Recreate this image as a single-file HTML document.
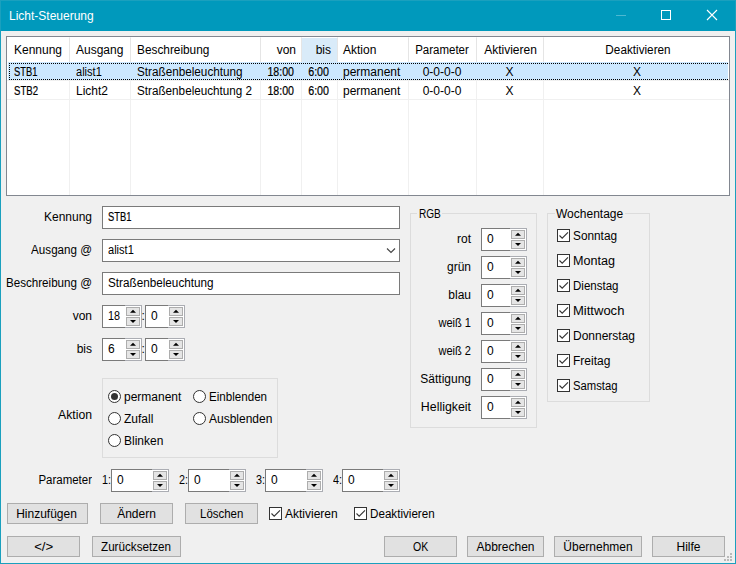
<!DOCTYPE html>
<html><head><meta charset="utf-8"><title>Licht-Steuerung</title>
<style>
*{box-sizing:border-box;margin:0;padding:0}
html,body{width:736px;height:564px;overflow:hidden;background:#f0f0f0}
body{font-family:"Liberation Sans",sans-serif;font-size:12px;color:#000;position:relative}
.a{position:absolute;white-space:nowrap;line-height:14px;height:14px}
.r{text-align:right}
.c{text-align:center}
.win{position:absolute;left:0;top:0;width:736px;height:564px;border:1px solid #1aa0be}
.title{position:absolute;left:0;top:0;width:736px;height:31px;background:#0099bc}
.lv{position:absolute;left:6px;top:36px;width:724px;height:160px;border:1px solid #828790;background:#fff}
.vl{position:absolute;top:37px;width:1px;height:158px;background:#f0f0f0}
.hl{position:absolute;left:7px;width:722px;height:1px;background:#f0f0f0}
.sel{position:absolute;left:8px;top:62px;width:720px;height:18px;background:#cce8ff}
.dh{position:absolute;left:9px;width:719px;height:1px;background:repeating-linear-gradient(90deg,#000 0 1px,transparent 1px 2px)}
.dv{position:absolute;left:9px;top:63px;width:1px;height:17px;background:repeating-linear-gradient(180deg,#000 0 1px,transparent 1px 2px)}
.inp{position:absolute;left:102px;width:298px;height:23px;border:1px solid #7a7a7a;background:#fff}
.btn{position:absolute;height:21px;border:1px solid #adadad;background:#e1e1e1;text-align:center;line-height:21px;white-space:nowrap}
.gb{position:absolute;border:1px solid #dcdcdc}
.gbl{position:absolute;background:#f0f0f0;padding:0 2px;line-height:14px;height:14px;white-space:nowrap}
.cb{position:absolute;width:13px;height:13px;border:1px solid #333;background:#fff}
.rb{position:absolute;width:13px;height:13px;border:1px solid #333;background:#fff;border-radius:50%}
.rb.on:after{content:"";position:absolute;left:2px;top:2px;width:7px;height:7px;border-radius:50%;background:#333}
.sp{position:absolute;height:23px;background:#fff;border:1px solid #abadb3}
.sp .e{position:absolute;left:-1px;top:-1px;height:23px;border:1px solid #7a7a7a;border-right:none;background:#fff}
.sp .u,.sp .d{position:absolute;right:1px;width:14px;height:9px;border:1px solid #adadad;background:#e5e5e5}
.sp .u{top:1px}.sp .d{top:11px}
.sp svg{position:absolute;left:0;top:0}
.sp .t{position:absolute;left:5px;top:3px;line-height:14px}
</style></head>
<body>
<div class="title"></div>
<div class="a " style="left:9px;top:9px;color:#fff">Licht-Steuerung</div>
<svg class="a" style="left:600px;top:0;width:136px;height:31px" width="136" height="31"><path d="M16 15.5 H26" stroke="#4db8d1" stroke-width="1"/><rect x="61.5" y="10.5" width="9" height="9" fill="none" stroke="#fff" stroke-width="1"/><path d="M107 10 L117 20 M117 10 L107 20" stroke="#fff" stroke-width="1.1"/></svg>
<div class="lv"></div>
<div style="position:absolute;left:302px;top:38px;width:35px;height:24px;background:#d9ebf9"></div>
<div class="vl" style="left:69px"></div><div class="vl" style="left:69px;top:38px;height:24px;background:#e5e5e5"></div>
<div class="vl" style="left:130px"></div><div class="vl" style="left:130px;top:38px;height:24px;background:#e5e5e5"></div>
<div class="vl" style="left:260px"></div><div class="vl" style="left:260px;top:38px;height:24px;background:#e5e5e5"></div>
<div class="vl" style="left:301px"></div><div class="vl" style="left:301px;top:38px;height:24px;background:#e5e5e5"></div>
<div class="vl" style="left:337px"></div><div class="vl" style="left:337px;top:38px;height:24px;background:#e5e5e5"></div>
<div class="vl" style="left:408px"></div><div class="vl" style="left:408px;top:38px;height:24px;background:#e5e5e5"></div>
<div class="vl" style="left:476px"></div><div class="vl" style="left:476px;top:38px;height:24px;background:#e5e5e5"></div>
<div class="vl" style="left:543px"></div><div class="vl" style="left:543px;top:38px;height:24px;background:#e5e5e5"></div>
<div class="hl" style="top:80px"></div><div class="hl" style="top:99px"></div>
<div class="sel"></div>
<div class="dh" style="top:63px"></div><div class="dh" style="top:79px"></div><div class="dv"></div>
<div class="a " style="left:14px;top:43px;">Kennung</div>
<div class="a " style="left:76px;top:43px;">Ausgang</div>
<div class="a " style="left:137px;top:43px;transform:scaleX(0.986);transform-origin:left center;">Beschreibung</div>
<div class="a r" style="left:261px;top:43px;width:35px;">von</div>
<div class="a r" style="left:301px;top:43px;width:30px;">bis</div>
<div class="a " style="left:343px;top:43px;">Aktion</div>
<div class="a c" style="left:408px;top:43px;width:68px;transform:scaleX(0.957);transform-origin:center center;">Parameter</div>
<div class="a c" style="left:477px;top:43px;width:67px;">Aktivieren</div>
<div class="a c" style="left:545px;top:43px;width:186px;transform:scaleX(0.978);transform-origin:center center;">Deaktivieren</div>
<div class="a " style="left:14px;top:65px;transform:scaleX(0.78);transform-origin:left center;-webkit-text-stroke:0.2px #000;">STB1</div>
<div class="a " style="left:76px;top:65px;transform:scaleX(0.92);transform-origin:left center;">alist1</div>
<div class="a " style="left:137px;top:65px;transform:scaleX(0.977);transform-origin:left center;">Straßenbeleuchtung</div>
<div class="a r" style="left:261px;top:65px;width:33px;transform:scaleX(0.885);transform-origin:right center;-webkit-text-stroke:0.2px #000;">18:00</div>
<div class="a r" style="left:301px;top:65px;width:28px;transform:scaleX(0.89);transform-origin:right center;-webkit-text-stroke:0.2px #000;">6:00</div>
<div class="a " style="left:343px;top:65px;">permanent</div>
<div class="a c" style="left:408px;top:65px;width:68px;">0-0-0-0</div>
<div class="a c" style="left:476px;top:65px;width:67px;">X</div>
<div class="a c" style="left:544px;top:65px;width:186px;">X</div>
<div class="a " style="left:14px;top:84px;transform:scaleX(0.8);transform-origin:left center;-webkit-text-stroke:0.2px #000;">STB2</div>
<div class="a " style="left:76px;top:84px;">Licht2</div>
<div class="a " style="left:137px;top:84px;transform:scaleX(0.975);transform-origin:left center;">Straßenbeleuchtung 2</div>
<div class="a r" style="left:261px;top:84px;width:33px;transform:scaleX(0.885);transform-origin:right center;-webkit-text-stroke:0.2px #000;">18:00</div>
<div class="a r" style="left:301px;top:84px;width:28px;transform:scaleX(0.89);transform-origin:right center;-webkit-text-stroke:0.2px #000;">6:00</div>
<div class="a " style="left:343px;top:84px;">permanent</div>
<div class="a c" style="left:408px;top:84px;width:68px;">0-0-0-0</div>
<div class="a c" style="left:476px;top:84px;width:67px;">X</div>
<div class="a c" style="left:544px;top:84px;width:186px;">X</div>
<div class="inp" style="top:206px"></div>
<div class="a r" style="left:0px;top:210px;width:92px;">Kennung</div>
<div class="a " style="left:108px;top:210px;transform:scaleX(0.78);transform-origin:left center;-webkit-text-stroke:0.2px #000;">STB1</div>
<div class="inp" style="top:239px"></div>
<div class="a r" style="left:0px;top:243px;width:92px;transform:scaleX(0.968);transform-origin:right center;">Ausgang @</div>
<div class="a " style="left:108px;top:243px;transform:scaleX(0.92);transform-origin:left center;">alist1</div>
<div class="inp" style="top:272px"></div>
<div class="a r" style="left:0px;top:276px;width:92px;transform:scaleX(0.968);transform-origin:right center;">Beschreibung @</div>
<div class="a " style="left:108px;top:276px;transform:scaleX(0.977);transform-origin:left center;">Straßenbeleuchtung</div>
<svg class="a" style="left:385px;top:246px;width:12px;height:10px" width="12" height="10"><path d="M2 2.5 L6 6.5 L10 2.5" fill="none" stroke="#444" stroke-width="1.1"/></svg>
<div class="a r" style="left:0px;top:309px;width:92px;">von</div>
<div class="sp" style="left:102px;top:305px;width:40px"><div class="e" style="width:23px"></div><div class="u"><svg width="12" height="7"><path d="M3 4.7 L6 1.7 L9 4.7Z" fill="#000"/></svg></div><div class="d"><svg width="12" height="7"><path d="M3 2 L9 2 L6 5Z" fill="#000"/></svg></div><div class="t" style="transform:scaleX(0.9);transform-origin:left center">18</div></div>
<div class="a " style="left:141.5px;top:309px;">:</div>
<div class="sp" style="left:145px;top:305px;width:40px"><div class="e" style="width:23px"></div><div class="u"><svg width="12" height="7"><path d="M3 4.7 L6 1.7 L9 4.7Z" fill="#000"/></svg></div><div class="d"><svg width="12" height="7"><path d="M3 2 L9 2 L6 5Z" fill="#000"/></svg></div><div class="t">0</div></div>
<div class="a r" style="left:0px;top:342px;width:92px;">bis</div>
<div class="sp" style="left:102px;top:338px;width:40px"><div class="e" style="width:23px"></div><div class="u"><svg width="12" height="7"><path d="M3 4.7 L6 1.7 L9 4.7Z" fill="#000"/></svg></div><div class="d"><svg width="12" height="7"><path d="M3 2 L9 2 L6 5Z" fill="#000"/></svg></div><div class="t">6</div></div>
<div class="a " style="left:141.5px;top:342px;">:</div>
<div class="sp" style="left:145px;top:338px;width:40px"><div class="e" style="width:23px"></div><div class="u"><svg width="12" height="7"><path d="M3 4.7 L6 1.7 L9 4.7Z" fill="#000"/></svg></div><div class="d"><svg width="12" height="7"><path d="M3 2 L9 2 L6 5Z" fill="#000"/></svg></div><div class="t">0</div></div>
<div class="gb" style="left:102px;top:378px;width:176px;height:80px"></div>
<div class="a r" style="left:0px;top:408px;width:92px;transform:scaleX(1.02);transform-origin:right center;">Aktion</div>
<div class="rb on" style="left:108px;top:390px"></div>
<div class="a " style="left:124px;top:390px;">permanent</div>
<div class="rb" style="left:108px;top:412px"></div>
<div class="a " style="left:124px;top:412px;">Zufall</div>
<div class="rb" style="left:108px;top:434px"></div>
<div class="a " style="left:124px;top:434px;">Blinken</div>
<div class="rb" style="left:193px;top:390px"></div>
<div class="a " style="left:209px;top:390px;transform:scaleX(0.967);transform-origin:left center;">Einblenden</div>
<div class="rb" style="left:193px;top:412px"></div>
<div class="a " style="left:209px;top:412px;">Ausblenden</div>
<div class="a r" style="left:0px;top:473px;width:92px;transform:scaleX(0.957);transform-origin:right center;">Parameter</div>
<div class="a " style="left:101.5px;top:473px;transform:scaleX(0.9);transform-origin:left center;">1:</div>
<div class="sp" style="left:111px;top:469px;width:58px"><div class="e" style="width:41px"></div><div class="u"><svg width="12" height="7"><path d="M3 4.7 L6 1.7 L9 4.7Z" fill="#000"/></svg></div><div class="d"><svg width="12" height="7"><path d="M3 2 L9 2 L6 5Z" fill="#000"/></svg></div><div class="t">0</div></div>
<div class="a " style="left:178.5px;top:473px;transform:scaleX(0.9);transform-origin:left center;">2:</div>
<div class="sp" style="left:188px;top:469px;width:58px"><div class="e" style="width:41px"></div><div class="u"><svg width="12" height="7"><path d="M3 4.7 L6 1.7 L9 4.7Z" fill="#000"/></svg></div><div class="d"><svg width="12" height="7"><path d="M3 2 L9 2 L6 5Z" fill="#000"/></svg></div><div class="t">0</div></div>
<div class="a " style="left:255.5px;top:473px;transform:scaleX(0.9);transform-origin:left center;">3:</div>
<div class="sp" style="left:265px;top:469px;width:58px"><div class="e" style="width:41px"></div><div class="u"><svg width="12" height="7"><path d="M3 4.7 L6 1.7 L9 4.7Z" fill="#000"/></svg></div><div class="d"><svg width="12" height="7"><path d="M3 2 L9 2 L6 5Z" fill="#000"/></svg></div><div class="t">0</div></div>
<div class="a " style="left:332.5px;top:473px;transform:scaleX(0.9);transform-origin:left center;">4:</div>
<div class="sp" style="left:342px;top:469px;width:58px"><div class="e" style="width:41px"></div><div class="u"><svg width="12" height="7"><path d="M3 4.7 L6 1.7 L9 4.7Z" fill="#000"/></svg></div><div class="d"><svg width="12" height="7"><path d="M3 2 L9 2 L6 5Z" fill="#000"/></svg></div><div class="t">0</div></div>
<div class="gb" style="left:410px;top:213px;width:127px;height:215px"></div>
<div class="gbl" style="left:417px;top:207px;width:25px;padding:0"><span class="t" style="display:inline-block;margin-left:2px;transform:scaleX(0.84);transform-origin:left center">RGB</span></div>
<div class="a r" style="left:400px;top:232px;width:71px;">rot</div>
<div class="sp" style="left:481px;top:228px;width:46px"><div class="e" style="width:29px"></div><div class="u"><svg width="12" height="7"><path d="M3 4.7 L6 1.7 L9 4.7Z" fill="#000"/></svg></div><div class="d"><svg width="12" height="7"><path d="M3 2 L9 2 L6 5Z" fill="#000"/></svg></div><div class="t">0</div></div>
<div class="a r" style="left:400px;top:260px;width:71px;">grün</div>
<div class="sp" style="left:481px;top:256px;width:46px"><div class="e" style="width:29px"></div><div class="u"><svg width="12" height="7"><path d="M3 4.7 L6 1.7 L9 4.7Z" fill="#000"/></svg></div><div class="d"><svg width="12" height="7"><path d="M3 2 L9 2 L6 5Z" fill="#000"/></svg></div><div class="t">0</div></div>
<div class="a r" style="left:400px;top:288px;width:71px;">blau</div>
<div class="sp" style="left:481px;top:284px;width:46px"><div class="e" style="width:29px"></div><div class="u"><svg width="12" height="7"><path d="M3 4.7 L6 1.7 L9 4.7Z" fill="#000"/></svg></div><div class="d"><svg width="12" height="7"><path d="M3 2 L9 2 L6 5Z" fill="#000"/></svg></div><div class="t">0</div></div>
<div class="a r" style="left:400px;top:316px;width:71px;transform:scaleX(0.92);transform-origin:right center;">weiß 1</div>
<div class="sp" style="left:481px;top:312px;width:46px"><div class="e" style="width:29px"></div><div class="u"><svg width="12" height="7"><path d="M3 4.7 L6 1.7 L9 4.7Z" fill="#000"/></svg></div><div class="d"><svg width="12" height="7"><path d="M3 2 L9 2 L6 5Z" fill="#000"/></svg></div><div class="t">0</div></div>
<div class="a r" style="left:400px;top:344px;width:71px;transform:scaleX(0.92);transform-origin:right center;">weiß 2</div>
<div class="sp" style="left:481px;top:340px;width:46px"><div class="e" style="width:29px"></div><div class="u"><svg width="12" height="7"><path d="M3 4.7 L6 1.7 L9 4.7Z" fill="#000"/></svg></div><div class="d"><svg width="12" height="7"><path d="M3 2 L9 2 L6 5Z" fill="#000"/></svg></div><div class="t">0</div></div>
<div class="a r" style="left:400px;top:372px;width:71px;">Sättigung</div>
<div class="sp" style="left:481px;top:368px;width:46px"><div class="e" style="width:29px"></div><div class="u"><svg width="12" height="7"><path d="M3 4.7 L6 1.7 L9 4.7Z" fill="#000"/></svg></div><div class="d"><svg width="12" height="7"><path d="M3 2 L9 2 L6 5Z" fill="#000"/></svg></div><div class="t">0</div></div>
<div class="a r" style="left:400px;top:400px;width:71px;transform:scaleX(1.03);transform-origin:right center;">Helligkeit</div>
<div class="sp" style="left:481px;top:396px;width:46px"><div class="e" style="width:29px"></div><div class="u"><svg width="12" height="7"><path d="M3 4.7 L6 1.7 L9 4.7Z" fill="#000"/></svg></div><div class="d"><svg width="12" height="7"><path d="M3 2 L9 2 L6 5Z" fill="#000"/></svg></div><div class="t">0</div></div>
<div class="gb" style="left:547px;top:213px;width:103px;height:189px"></div>
<div class="gbl" style="left:555px;top:207px;width:70px;padding:0 0 0 1px">Wochentage</div>
<div class="cb" style="left:557px;top:229px"><svg width="11" height="11" style="position:absolute;left:0;top:0"><path d="M1.5 5.5 L4.2 8.2 L10 2.4" fill="none" stroke="#333" stroke-width="1.1"/></svg></div>
<div class="a " style="left:573px;top:229px;transform:scaleX(0.985);transform-origin:left center;">Sonntag</div>
<div class="cb" style="left:557px;top:254px"><svg width="11" height="11" style="position:absolute;left:0;top:0"><path d="M1.5 5.5 L4.2 8.2 L10 2.4" fill="none" stroke="#333" stroke-width="1.1"/></svg></div>
<div class="a " style="left:573px;top:254px;transform:scaleX(1.05);transform-origin:left center;">Montag</div>
<div class="cb" style="left:557px;top:279px"><svg width="11" height="11" style="position:absolute;left:0;top:0"><path d="M1.5 5.5 L4.2 8.2 L10 2.4" fill="none" stroke="#333" stroke-width="1.1"/></svg></div>
<div class="a " style="left:573px;top:279px;transform:scaleX(0.96);transform-origin:left center;">Dienstag</div>
<div class="cb" style="left:557px;top:304px"><svg width="11" height="11" style="position:absolute;left:0;top:0"><path d="M1.5 5.5 L4.2 8.2 L10 2.4" fill="none" stroke="#333" stroke-width="1.1"/></svg></div>
<div class="a " style="left:573px;top:304px;transform:scaleX(1.085);transform-origin:left center;">Mittwoch</div>
<div class="cb" style="left:557px;top:329px"><svg width="11" height="11" style="position:absolute;left:0;top:0"><path d="M1.5 5.5 L4.2 8.2 L10 2.4" fill="none" stroke="#333" stroke-width="1.1"/></svg></div>
<div class="a " style="left:573px;top:329px;">Donnerstag</div>
<div class="cb" style="left:557px;top:354px"><svg width="11" height="11" style="position:absolute;left:0;top:0"><path d="M1.5 5.5 L4.2 8.2 L10 2.4" fill="none" stroke="#333" stroke-width="1.1"/></svg></div>
<div class="a " style="left:573px;top:354px;">Freitag</div>
<div class="cb" style="left:557px;top:379px"><svg width="11" height="11" style="position:absolute;left:0;top:0"><path d="M1.5 5.5 L4.2 8.2 L10 2.4" fill="none" stroke="#333" stroke-width="1.1"/></svg></div>
<div class="a " style="left:573px;top:379px;transform:scaleX(0.94);transform-origin:left center;">Samstag</div>
<div class="btn" style="left:7px;top:503px;width:81px"><span style="display:inline-block;transform:translateX(-1px) scaleX(1)">Hinzufügen</span></div>
<div class="btn" style="left:100px;top:503px;width:73px">Ändern</div>
<div class="btn" style="left:185px;top:503px;width:73px"><span style="display:inline-block;transform:translateX(0px) scaleX(0.955)">Löschen</span></div>
<div class="cb" style="left:269px;top:507px"><svg width="11" height="11" style="position:absolute;left:0;top:0"><path d="M1.5 5.5 L4.2 8.2 L10 2.4" fill="none" stroke="#333" stroke-width="1.1"/></svg></div>
<div class="a " style="left:285px;top:507px;">Aktivieren</div>
<div class="cb" style="left:354px;top:507px"><svg width="11" height="11" style="position:absolute;left:0;top:0"><path d="M1.5 5.5 L4.2 8.2 L10 2.4" fill="none" stroke="#333" stroke-width="1.1"/></svg></div>
<div class="a " style="left:370px;top:507px;transform:scaleX(0.97);transform-origin:left center;">Deaktivieren</div>
<div class="btn" style="left:7px;top:536px;width:73px"><span style="display:inline-block;transform:translateX(0px) scaleX(1.1)">&lt;/&gt;</span></div>
<div class="btn" style="left:92px;top:536px;width:89px"><span style="display:inline-block;transform:translateX(0px) scaleX(0.972)">Zurücksetzen</span></div>
<div class="btn" style="left:384px;top:536px;width:73px"><span style="display:inline-block;transform:translateX(0px) scaleX(0.88)">OK</span></div>
<div class="btn" style="left:467px;top:536px;width:77px">Abbrechen</div>
<div class="btn" style="left:554px;top:536px;width:88px">Übernehmen</div>
<div class="btn" style="left:652px;top:536px;width:73px">Hilfe</div>
<svg class="a" style="left:724px;top:553px;width:11px;height:9px" width="11" height="9"><rect x="6" y="0" width="2" height="2" fill="#b9b9b9"/><rect x="6" y="3" width="2" height="2" fill="#b9b9b9"/><rect x="3" y="3" width="2" height="2" fill="#b9b9b9"/><rect x="6" y="6" width="2" height="2" fill="#b9b9b9"/><rect x="3" y="6" width="2" height="2" fill="#b9b9b9"/><rect x="0" y="6" width="2" height="2" fill="#b9b9b9"/></svg>
<div class="win"></div>
</body></html>
